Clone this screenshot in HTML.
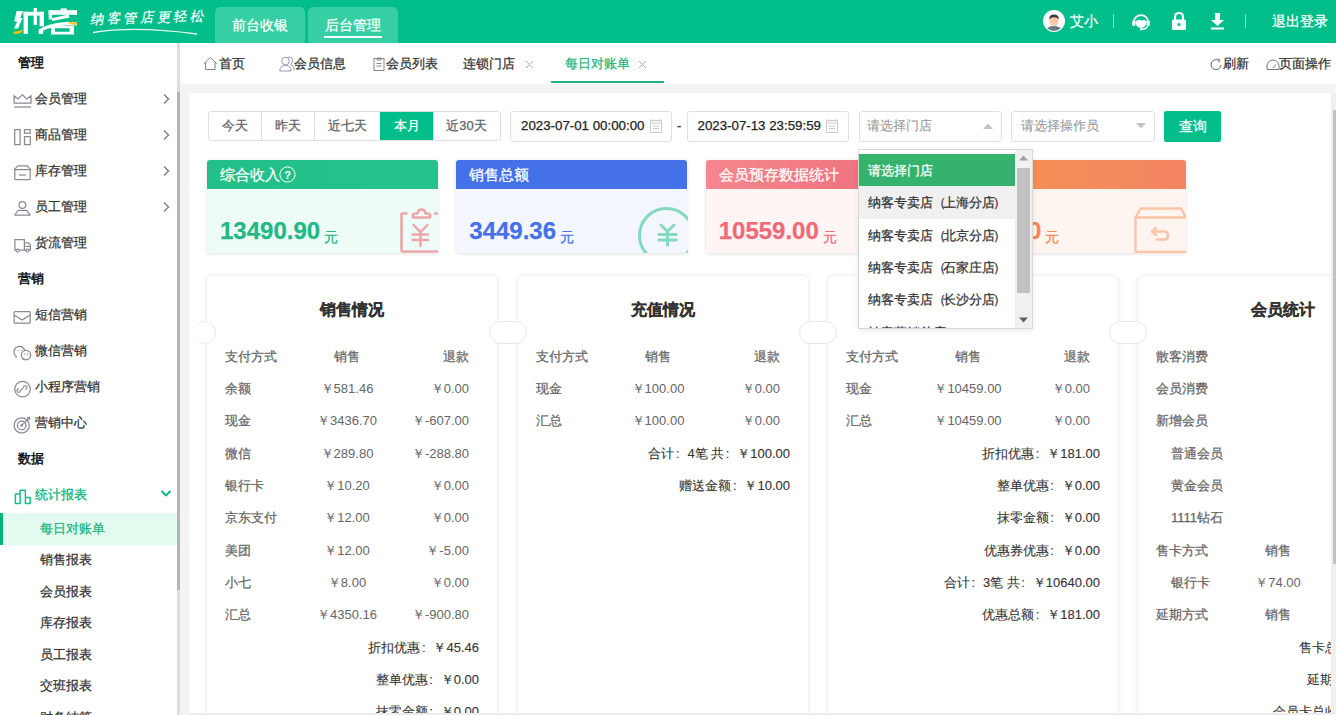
<!DOCTYPE html>
<html><head><meta charset="utf-8">
<style>
*{box-sizing:border-box;margin:0;padding:0}
body{width:1336px;height:715px;overflow:hidden;position:relative;background:#f4f4f4;font-family:"Liberation Sans",sans-serif;font-size:13px;color:#333;-webkit-text-stroke:0.25px currentColor}
.a{position:absolute;white-space:nowrap}
#hdr{position:absolute;left:0;top:0;width:1336px;height:43px;background:#00be8a}
.ntab{position:absolute;top:7px;width:90px;height:36px;background:#36cfa4;border-radius:5px 5px 0 0;color:#fff;font-size:14px;text-align:center;line-height:36px}
#side{position:absolute;left:0;top:43px;width:177px;height:672px;background:#fff;overflow:hidden}
.sh{position:absolute;left:18px;font-size:13px;color:#111;line-height:20px;-webkit-text-stroke:0.5px #111}
.si{position:absolute;left:35px;font-size:13px;color:#333;line-height:20px}
.sic{position:absolute;left:12px;width:20px;height:20px}
.arr{position:absolute;left:162px;width:9px;height:12px}
.ss{position:absolute;left:40px;font-size:13px;color:#333;line-height:20px}
#tabs{position:absolute;left:180px;top:43px;width:1156px;height:41px;background:#fff}
#main{position:absolute;left:189px;top:93px;width:1142px;height:620px;background:#fff;overflow:hidden}

.btng{position:absolute;left:207.5px;top:111px;height:30px;border:1px solid #dcdfe6;border-radius:3px;display:flex;overflow:hidden;background:#fff}
.btng div{height:28px;line-height:28px;text-align:center;color:#606266;font-size:13px;border-left:1px solid #dcdfe6}
.btng div:first-child{border-left:none}
.inp{position:absolute;top:111px;height:31px;border:1px solid #dcdfe6;border-radius:3px;background:#fff}
.stc{position:absolute;top:160px;width:231px;height:93px;border-radius:3px;box-shadow:0 1px 4px rgba(0,0,0,.12);overflow:hidden}
.stc .hd{height:29px;line-height:29px;color:#fff;font-size:15px;padding-left:13px}
.stc .num{position:absolute;left:13px;top:56px;font-size:24px;font-weight:bold;line-height:30px;font-family:"Liberation Sans",sans-serif}
.stc .yuan{font-size:14px;font-weight:normal;margin-left:4px;position:relative;top:3px}
.sec{position:absolute;top:275.5px;width:290px;height:460px;background:#fff;border-radius:5px;box-shadow:0 0 4px rgba(0,0,0,.13)}
.sec .tt{position:absolute;left:0;top:23px;width:290px;text-align:center;font-size:16px;font-weight:bold;color:#333;line-height:22px}
.row{position:absolute;left:18px;width:244px;height:20px;line-height:20px;color:#666;font-size:13px}
.row span{position:absolute;top:0;width:81.33px;white-space:nowrap}
.row .c1{left:0}
.row .c2{left:81.33px;text-align:center;-webkit-text-stroke:0}
.row .c3{left:162.67px;text-align:right;-webkit-text-stroke:0}
.sum{position:absolute;right:18px;height:20px;line-height:20px;color:#333;font-size:13px;white-space:nowrap;text-align:right}
.sum b{font-weight:normal;margin-left:4px}
.dd{position:absolute;left:858px;top:149px;width:174.5px;height:180px;background:#fff;border:1px solid #d8d8d8;box-shadow:0 2px 6px rgba(0,0,0,.08);overflow:hidden}
.dd .op{position:absolute;left:0;width:156px;height:32.3px;line-height:34px;padding-left:8.5px;font-size:13px;color:#333;white-space:nowrap}
.cl{font-style:normal;display:inline-block;width:13px;text-align:left;padding-left:1.5px}
</style></head><body>
<div id="hdr">
  <svg class="a" style="left:0;top:0" width="90" height="43" viewBox="0 0 90 43"><g fill="#fff">
<polygon points="16.6,11 23.2,11 20.2,18 22.6,18 18,28.6 14,28.6 17.2,21.6 14.2,21.6"/>
<rect x="23.6" y="11.8" width="4.4" height="22"/>
<rect x="23.6" y="11.8" width="20.4" height="3.8"/>
<rect x="33.6" y="8" width="3.3" height="17"/>
<rect x="39.6" y="11.8" width="4.4" height="14.5"/>
<rect x="38.6" y="30.6" width="4.6" height="3.2"/>
<path d="M38.5 29.5 Q50 22.5 66 22 L77 22 L77 25.5 L66 25.5 Q52 26 40 32 Z"/>
<rect x="60.6" y="8.4" width="6.2" height="2.4"/>
<rect x="48.7" y="10.2" width="28.3" height="4.6"/>
<rect x="48.7" y="10.2" width="3.3" height="9.2"/>
<rect x="73.2" y="10.2" width="3.8" height="4.8"/>
<path d="M51.5 18.2 L68.5 14.6 L69.5 17.6 L52.5 21 Z"/>
<path d="M51 26 H74 V34.6 H51 Z M55 28.2 V31.8 H69.6 V28.2 Z" fill-rule="evenodd"/>
</g>
<path d="M13.6 31.8 Q18.5 31.5 22.8 29.6 L21.6 32.4 Q17.5 34.4 13.8 33.9 Z" fill="#f7c000"/>
<path d="M66.5 20.8 Q71.5 23.2 77 22 L76.6 24.8 Q71 25.6 66.5 20.8 Z" fill="#f7c000"/>
</svg>
  <div class="a" style="left:91px;top:8.5px;font-size:13.5px;color:#fff;letter-spacing:2.6px;line-height:18px;font-family:'Liberation Serif',serif;transform:skewX(-12deg) rotate(-2deg);-webkit-text-stroke:0.2px #fff">纳客管店更轻松</div>
  <svg class="a" style="left:90px;top:27px" width="112" height="8"><path d="M3 5.5 Q45 -1.5 107 7" stroke="#e6f8f0" stroke-width="1.3" fill="none"/></svg>
  <div class="ntab" style="left:215px">前台收银</div>
  <div class="ntab" style="left:308px">后台管理</div>
  <div class="a" style="left:324px;top:36px;width:58px;height:2px;background:#fff"></div>
  <svg class="a" style="left:1043px;top:10px" width="22" height="22" viewBox="0 0 22 22"><circle cx="11" cy="11" r="11" fill="#fff"/><clipPath id="cav"><circle cx="11" cy="11" r="10"/></clipPath><g clip-path="url(#cav)"><ellipse cx="11" cy="21" rx="8" ry="5" fill="#6d7783"/><ellipse cx="11" cy="10.5" rx="4.6" ry="5.2" fill="#f5c7a5"/><path d="M6.2 9.5 Q6 4.6 11 4.6 Q16 4.6 15.8 9.5 Q14 7 11 7.2 Q8 7 6.2 9.5Z" fill="#3a3a3a"/></g></svg>
  <div class="a" style="left:1070px;top:12px;font-size:14px;color:#fff;line-height:18px">艾小</div>
  <div class="a" style="left:1113px;top:14px;width:1px;height:14px;background:rgba(255,255,255,.55)"></div>
  <svg class="a" style="left:1131px;top:11px" width="20" height="20" viewBox="0 0 20 20"><path d="M2.6 11.5 A7.4 7.4 0 0 1 17.4 11.5" stroke="#fff" stroke-width="1.7" fill="none"/><rect x="1.2" y="9.5" width="3.2" height="5.5" rx="1.2" fill="#fff"/><rect x="15.6" y="9.5" width="3.2" height="5.5" rx="1.2" fill="#fff"/><circle cx="10" cy="11.3" r="5.6" fill="#fff"/><path d="M4.6 10.2 Q5.8 5.8 10 5.8 Q14.2 5.8 15.4 10.2 Q13 8.4 11.2 9.6 Q8.6 8.2 4.6 10.2Z" fill="#00be8a"/><path d="M16.6 14.5 Q15.8 18.3 11 18.3" stroke="#fff" stroke-width="1.3" fill="none"/><circle cx="10.3" cy="18.3" r="1.3" fill="#fff"/></svg>
  <svg class="a" style="left:1171px;top:11px" width="16" height="20" viewBox="0 0 16 20"><path d="M4 9 V6 Q4 2 8 2 Q12 2 12 6 V9" stroke="#fff" stroke-width="2.2" fill="none"/><rect x="1" y="8.5" width="14" height="10.5" rx="1.5" fill="#fff"/><circle cx="8" cy="13.5" r="1.6" fill="#00be8a"/></svg>
  <svg class="a" style="left:1210px;top:12px" width="15" height="18" viewBox="0 0 15 18"><path d="M5 1 H10 V8 H14 L7.5 14 L1 8 H5Z" fill="#fff"/><rect x="1" y="15.5" width="13" height="2" fill="#fff"/></svg>
  <div class="a" style="left:1245px;top:14px;width:1px;height:14px;background:rgba(255,255,255,.55)"></div>
  <div class="a" style="left:1272px;top:12px;font-size:14px;color:#fff;line-height:18px">退出登录</div>
</div>
<div id="side">
<div class="sh" style="top:10px">管理</div>
<svg class="sic" style="top:47px" viewBox="0 0 20 20"><path d="M2.1 5.8 L6 9 L10.4 4.8 L14.8 9 L19 5.8 V13.2 H2.1 Z" stroke="#8a8a94" stroke-width="1.25" fill="none" stroke-linejoin="miter"/><path d="M2.1 17 H19" stroke="#8a8a94" stroke-width="1.25" fill="none" stroke-width="1.3"/></svg>
<div class="si" style="top:46px">会员管理</div>
<svg class="arr" style="top:50px" viewBox="0 0 9 12"><path d="M2 1.5 L6.5 6 L2 10.5" stroke="#888" stroke-width="1.6" fill="none"/></svg>
<svg class="sic" style="top:83px" viewBox="0 0 20 20"><rect x="2.7" y="3.6" width="5.4" height="15" stroke="#8a8a94" stroke-width="1.25" fill="none"/><rect x="12.5" y="3.6" width="5.8" height="3.6" stroke="#8a8a94" stroke-width="1.25" fill="none"/><rect x="12.5" y="10.6" width="5.8" height="8" stroke="#8a8a94" stroke-width="1.25" fill="none"/></svg>
<div class="si" style="top:82px">商品管理</div>
<svg class="arr" style="top:86px" viewBox="0 0 9 12"><path d="M2 1.5 L6.5 6 L2 10.5" stroke="#888" stroke-width="1.6" fill="none"/></svg>
<svg class="sic" style="top:119px" viewBox="0 0 20 20"><path d="M2.8 7.6 V16.6 Q2.8 17.6 3.8 17.6 H17.2 Q18.2 17.6 18.2 16.6 V7.6" stroke="#8a8a94" stroke-width="1.25" fill="none"/><path d="M2.3 7.6 L5.8 3.8 H15.1 L18.6 7.6 Z" stroke="#8a8a94" stroke-width="1.25" fill="none" stroke-linejoin="round"/><path d="M7 13 H13.8" stroke="#8a8a94" stroke-width="1.25" fill="none"/></svg>
<div class="si" style="top:118px">库存管理</div>
<svg class="arr" style="top:122px" viewBox="0 0 9 12"><path d="M2 1.5 L6.5 6 L2 10.5" stroke="#888" stroke-width="1.6" fill="none"/></svg>
<svg class="sic" style="top:155px" viewBox="0 0 20 20"><circle cx="10.4" cy="6.9" r="3.4" stroke="#8a8a94" stroke-width="1.25" fill="none"/><path d="M2.8 17 L5.6 13 Q6.1 12.4 7 12.4 H13.8 Q14.7 12.4 15.2 13 L18.2 17 Z" stroke="#8a8a94" stroke-width="1.25" fill="none" stroke-linejoin="round"/></svg>
<div class="si" style="top:154px">员工管理</div>
<svg class="arr" style="top:158px" viewBox="0 0 9 12"><path d="M2 1.5 L6.5 6 L2 10.5" stroke="#888" stroke-width="1.6" fill="none"/></svg>
<svg class="sic" style="top:191px" viewBox="0 0 20 20"><path d="M2.9 16 V5.5 H12.4 V16 Z" stroke="#8a8a94" stroke-width="1.25" fill="none"/><path d="M12.4 8.9 H16.5 L18.3 10.8 V16 H12.4" stroke="#8a8a94" stroke-width="1.25" fill="none"/><path d="M13.4 12.4 H18.3" stroke="#8a8a94" stroke-width="1.25" fill="none"/><circle cx="5.6" cy="16.5" r="1.5" fill="#fff" stroke="#8a8a94" stroke-width="1.25" fill="none"/><circle cx="15.5" cy="16.5" r="1.5" fill="#fff" stroke="#8a8a94" stroke-width="1.25" fill="none"/></svg>
<div class="si" style="top:190px">货流管理</div>
<div class="sh" style="top:226px">营销</div>
<svg class="sic" style="top:263px" viewBox="0 0 20 20"><rect x="2.1" y="5.6" width="16.1" height="11.6" rx="1" stroke="#8a8a94" stroke-width="1.25" fill="none"/><path d="M2.1 9 L10.2 14 L18.2 9" stroke="#8a8a94" stroke-width="1.25" fill="none"/></svg>
<div class="si" style="top:262px">短信营销</div>
<svg class="sic" style="top:299px" viewBox="0 0 20 20"><path d="M4.5 14.5 A5.5 5.5 0 1 1 9.5 15" stroke="#8a8a94" stroke-width="1.25" fill="none"/><path d="M3.6 15.6 L4.5 14.2" stroke="#8a8a94" stroke-width="1.25" fill="none"/><circle cx="14" cy="13.1" r="4.7" fill="#fff" stroke="#8a8a94" stroke-width="1.25" fill="none"/><path d="M10.8 17.6 L11.6 16.4" stroke="#8a8a94" stroke-width="1.25" fill="none"/><circle cx="6.3" cy="8.4" r=".6" fill="#8a8a94"/><circle cx="9.5" cy="8.4" r=".6" fill="#8a8a94"/><path d="M12.4 11.4 V12.8 M15.5 11.4 V12.8" stroke="#8a8a94" stroke-width="1.25" fill="none" stroke-width="1"/></svg>
<div class="si" style="top:298px">微信营销</div>
<svg class="sic" style="top:335px" viewBox="0 0 20 20"><circle cx="10.5" cy="11.1" r="7.8" stroke="#8a8a94" stroke-width="1.25" fill="none"/><path d="M8.6 12.6 A1.8 1.8 0 1 1 6.8 10.8 M8.6 12.6 L11.4 9.6 M11.4 9.6 A1.8 1.8 0 1 1 13.2 11.4" stroke="#8a8a94" stroke-width="1.25" fill="none"/></svg>
<div class="si" style="top:334px">小程序营销</div>
<svg class="sic" style="top:371px" viewBox="0 0 20 20"><circle cx="9.7" cy="11.4" r="7.6" stroke="#8a8a94" stroke-width="1.25" fill="none"/><circle cx="9.7" cy="11.4" r="4.3" stroke="#8a8a94" stroke-width="1.25" fill="none"/><circle cx="9.7" cy="11.4" r="1.3" fill="#8a8a94"/><path d="M9.7 11.4 L17.3 3.8" stroke="#8a8a94" stroke-width="1.25" fill="none"/><path d="M15 3.6 L17.6 3.5 L17.5 6" stroke="#8a8a94" stroke-width="1.25" fill="none"/></svg>
<div class="si" style="top:370px">营销中心</div>
<div class="sh" style="top:406px">数据</div>
<svg class="sic" style="top:443px" viewBox="0 0 20 20"><path d="M3.4 17.6 V8 H8.1 V17.6 Z M8.1 17.6 V4.2 H13.4 V17.6 M13.4 17.6 V11.6 H18.2 V17.6 Z" stroke="#17bf88" stroke-width="1.5" fill="none" stroke-linejoin="round"/></svg>
<div class="si" style="top:442px;color:#00b37a">统计报表</div>
<svg class="arr" style="top:446px;left:160px;width:12px;height:9px" viewBox="0 0 12 9"><path d="M1.5 2 L6 6.5 L10.5 2" stroke="#00b37a" stroke-width="1.8" fill="none"/></svg>
<div class="a" style="left:0;top:470px;width:177px;height:32px;background:#e3fbef"></div><div class="a" style="left:0;top:470px;width:3px;height:32px;background:#00b37a"></div>
<div class="ss" style="top:475.5px;color:#1fb37f">每日对账单</div>
<div class="ss" style="top:507.0px">销售报表</div>
<div class="ss" style="top:538.5px">会员报表</div>
<div class="ss" style="top:570.0px">库存报表</div>
<div class="ss" style="top:601.5px">员工报表</div>
<div class="ss" style="top:633.0px">交班报表</div>
<div class="ss" style="top:664.5px">财务结算</div>
</div>
<div class="a" style="left:177px;top:43px;width:3px;height:672px;background:#dedede"></div>
<div class="a" style="left:177px;top:92px;width:3px;height:498px;background:#b5b5b5"></div>
<div id="tabs">
  <svg class="a" style="left:23px;top:13px" width="15" height="16" viewBox="0 0 15 16"><path d="M0.8 7.8 L7.3 1.5 L13.8 7.8" stroke="#777" stroke-width="0.9" fill="none"/><path d="M2.6 6 V13.5 H12 V6" stroke="#777" stroke-width="0.9" fill="none"/></svg>
  <div class="a" style="left:39px;top:11px;line-height:20px">首页</div>
  <svg class="a" style="left:99px;top:13px" width="16" height="16" viewBox="0 0 16 16"><path d="M8.6 1.8 Q9.5 1 10.8 1 Q13.6 1 13.6 4.4 Q13.6 7 11.5 8.2 Q15 9.2 15 14.5" stroke="#8a8aa0" stroke-width="0.9" fill="none"/><circle cx="6.5" cy="5" r="3.8" stroke="#8a8aa0" stroke-width="0.9" fill="#fff"/><path d="M0.8 15 Q0.8 9.5 6.5 9.5 Q12.2 9.5 12.2 15 Z" stroke="#8a8aa0" stroke-width="0.9" fill="#fff"/></svg>
  <div class="a" style="left:114px;top:11px;line-height:20px">会员信息</div>
  <svg class="a" style="left:193px;top:14px" width="12" height="14" viewBox="0 0 12 14"><rect x="1" y="1.5" width="10" height="12" stroke="#888" stroke-width="1" fill="none"/><path d="M4 1 H8 V3 H4Z" stroke="#888" stroke-width="1" fill="none"/><path d="M3.5 6.5 H8.5 M3.5 9 H8.5" stroke="#888" stroke-width="1"/></svg>
  <div class="a" style="left:206px;top:11px;line-height:20px">会员列表</div>
  <div class="a" style="left:283px;top:11px;line-height:20px">连锁门店</div>
  <svg class="a" style="left:345px;top:17px" width="9" height="9" viewBox="0 0 9 9"><path d="M1 1 L8 8 M8 1 L1 8" stroke="#aaa" stroke-width="1"/></svg>
  <div class="a" style="left:385px;top:11px;line-height:20px;color:#1fb37f">每日对账单</div>
  <svg class="a" style="left:458px;top:17px" width="9" height="9" viewBox="0 0 9 9"><path d="M1 1 L8 8 M8 1 L1 8" stroke="#aaa" stroke-width="1"/></svg>
  <div class="a" style="left:371px;top:38px;width:113px;height:2px;background:#1fb37f"></div>
  <svg class="a" style="left:1030px;top:15px" width="13" height="13" viewBox="0 0 13 13"><path d="M11 7 A5 5 0 1 1 8.5 2.3" stroke="#666" stroke-width="1" fill="none"/><path d="M7.5 0.8 L10 2.2 L8.5 4.6" stroke="#666" stroke-width="1" fill="none"/></svg>
  <div class="a" style="left:1043px;top:11px;line-height:20px">刷新</div>
  <svg class="a" style="left:1086px;top:15px" width="14" height="13" viewBox="0 0 14 13"><path d="M1 11.5 V8 A6 6 0 0 1 13 8 V11.5 Z" stroke="#777" stroke-width="1" fill="none"/><path d="M7 10 L10 6.5" stroke="#777" stroke-width="1"/></svg>
  <div class="a" style="left:1099px;top:11px;line-height:20px">页面操作</div>
</div>
<div id="main">
<div class="a" style="left:-189px;top:-93px;width:1336px;height:715px">
<div class="btng"><div style="width:52px">今天</div><div style="width:53px">昨天</div><div style="width:66.5px">近七天</div><div style="width:52.5px;background:#00be8a;color:#fff;border-left-color:#00be8a">本月</div><div style="width:67px">近30天</div></div>
<div class="inp" style="left:510px;width:162px"></div>
<div class="a" style="left:521px;top:116px;line-height:20px;font-size:13.3px;color:#222">2023-07-01 00:00:00</div>
<svg class="a" style="left:650px;top:119px" width="12" height="14" viewBox="0 0 12 14"><rect x="0.5" y="1.5" width="11" height="12" stroke="#ccc" stroke-width="1" fill="none"/><path d="M0.5 4 H11.5 M3 7 H9 M3 9.5 H9" stroke="#ccc" stroke-width="1"/><path d="M3 0 V2 M9 0 V2" stroke="#ccc" stroke-width="1"/></svg>
<div class="a" style="left:677px;top:116px;line-height:20px;font-size:13px;color:#333">-</div>
<div class="inp" style="left:687px;width:162px"></div>
<div class="a" style="left:697.5px;top:116px;line-height:20px;font-size:13.3px;color:#222">2023-07-13 23:59:59</div>
<svg class="a" style="left:826px;top:119px" width="12" height="14" viewBox="0 0 12 14"><rect x="0.5" y="1.5" width="11" height="12" stroke="#ccc" stroke-width="1" fill="none"/><path d="M0.5 4 H11.5 M3 7 H9 M3 9.5 H9" stroke="#ccc" stroke-width="1"/><path d="M3 0 V2 M9 0 V2" stroke="#ccc" stroke-width="1"/></svg>
<div class="inp" style="left:858.5px;width:143px"></div>
<div class="a" style="left:867px;top:116px;line-height:20px;font-size:13px;color:#999;-webkit-text-stroke:0.1px #999">请选择门店</div>
<svg class="a" style="left:983px;top:123px" width="10" height="6" viewBox="0 0 10 6"><path d="M0 6 L5 0.5 L10 6Z" fill="#c0c4cc"/></svg>
<div class="inp" style="left:1011px;width:144px"></div>
<div class="a" style="left:1021px;top:116px;line-height:20px;font-size:13px;color:#999;-webkit-text-stroke:0.1px #999">请选择操作员</div>
<svg class="a" style="left:1136px;top:123px" width="10" height="6" viewBox="0 0 10 6"><path d="M0 0 L5 5.5 L10 0Z" fill="#c0c4cc"/></svg>
<div class="a" style="left:1164px;top:111px;width:57px;height:31px;background:#00be8a;border-radius:2px;color:#fff;font-size:14px;text-align:center;line-height:31px">查询</div>
<div class="stc" style="left:207px;background:#edfcf7"><div class="hd" style="background:linear-gradient(90deg,#22bf88,#26c28c)">综合收入</div><div class="num" style="color:#22b884">13490.90<span class="yuan">元</span></div></div>
<div class="stc" style="left:456.3px;background:#f3f7fd"><div class="hd" style="background:#4470e8">销售总额</div><div class="num" style="color:#4470e8">3449.36<span class="yuan">元</span></div></div>
<div class="stc" style="left:705.7px;background:#fff5f5"><div class="hd" style="background:linear-gradient(100deg,#f5878e,#ec6b78)">会员预存数据统计</div><div class="num" style="color:#ef6a76">10559.00<span class="yuan">元</span></div></div>
<div class="stc" style="left:955px;background:#fff5f0"><div class="hd" style="background:linear-gradient(100deg,#f6934f,#f38563)"></div><div class="num" style="color:#f5874e">640.00<span class="yuan">元</span></div></div>
<svg class="a" style="left:279px;top:166px" width="17" height="17" viewBox="0 0 17 17"><circle cx="8.5" cy="8.5" r="7.6" stroke="#fff" stroke-width="1" fill="none"/><text x="8.5" y="12.6" text-anchor="middle" font-size="11" fill="#fff" font-family="Liberation Sans" font-weight="bold">?</text></svg>
<svg class="a" style="left:400px;top:208px" width="38" height="45" viewBox="0 0 38 45"><path d="M7.5 5.5 H2.5 Q1.5 5.5 1.5 6.5 V42 Q1.5 43.5 3 43.5 H40 M34 5.5 H40" stroke="#eaa6a8" stroke-width="2.6" fill="none"/><path d="M13 9.5 Q12 5.5 15.5 5.5 H17.5 Q18 1.5 21.5 1.5 Q25 1.5 25.5 5.5 H27.5 Q31 5.5 30 9.5 Z" stroke="#eaa6a8" stroke-width="2.6" fill="none" stroke-linejoin="round"/><path d="M13.5 17 L20.5 24 L27.5 17 M12.5 26.5 H28 M12.5 32 H28 M20.5 24 V38" stroke="#eaa6a8" stroke-width="2.4" fill="none" stroke-linecap="round"/></svg>
<svg class="a" style="left:636px;top:205px" width="52" height="48" viewBox="0 0 52 48"><circle cx="30.5" cy="30.5" r="27" stroke="#86d9bf" stroke-width="3" fill="none"/><path d="M25 20 L31.5 26.5 L38 20 M22.8 29.5 H40.2 M22.8 35 H40.2 M31.5 26.5 V40" stroke="#86d9bf" stroke-width="3" fill="none" stroke-linecap="round"/></svg>
<svg class="a" style="left:1134px;top:207px" width="52" height="46" viewBox="0 0 52 46"><path d="M1.5 44 V10.5 L6.5 1.5 H47 L52 10.5 M1.5 10.5 H52 M1.5 44 Q1.5 45 3 45 H52" stroke="#fcc4a6" stroke-width="2.4" fill="none" stroke-linejoin="round"/><path d="M22 21 L18 24.5 L22 28 M18.5 24.5 H30 Q34 24.5 34 28.5 Q34 32.5 30 32.5 H23" stroke="#fcc4a6" stroke-width="2.6" fill="none" stroke-linecap="round" stroke-linejoin="round"/></svg>
<div class="sec" style="left:207px"></div>
<div class="sec" style="left:518px"></div>
<div class="sec" style="left:828px"></div>
<div class="sec" style="left:1138px"></div>
<div class="a" style="left:194px;top:320.5px;width:22px;height:23px;border-radius:50%;border:1px solid #e8e8e8;border-left-color:#fbfbfb;border-top-color:#f0f0f0;border-bottom-color:#f0f0f0;background:#fff"></div>
<div class="a" style="left:488.5px;top:320.5px;width:38px;height:23px;border-radius:11.5px;border:1px solid #e6e6e6;background:#fff"></div>
<div class="a" style="left:799px;top:320.5px;width:38px;height:23px;border-radius:11.5px;border:1px solid #e6e6e6;background:#fff"></div>
<div class="a" style="left:1109px;top:320.5px;width:38px;height:23px;border-radius:11.5px;border:1px solid #e6e6e6;background:#fff"></div>
<div class="a" style="left:207px;top:299px;width:290px;text-align:center;font-size:16px;font-weight:bold;color:#333;line-height:22px">销售情况</div>
<div class="row" style="left:225px;top:346.60px"><span class="c1">支付方式</span><span class="c2" style="-webkit-text-stroke:0.25px #666">销售</span><span class="c3" style="-webkit-text-stroke:0.25px #666">退款</span></div>
<div class="row" style="left:225px;top:378.95px"><span class="c1">余额</span><span class="c2">￥581.46</span><span class="c3">￥0.00</span></div>
<div class="row" style="left:225px;top:411.30px"><span class="c1">现金</span><span class="c2">￥3436.70</span><span class="c3">￥-607.00</span></div>
<div class="row" style="left:225px;top:443.65px"><span class="c1">微信</span><span class="c2">￥289.80</span><span class="c3">￥-288.80</span></div>
<div class="row" style="left:225px;top:476.00px"><span class="c1">银行卡</span><span class="c2">￥10.20</span><span class="c3">￥0.00</span></div>
<div class="row" style="left:225px;top:508.35px"><span class="c1">京东支付</span><span class="c2">￥12.00</span><span class="c3">￥0.00</span></div>
<div class="row" style="left:225px;top:540.70px"><span class="c1">美团</span><span class="c2">￥12.00</span><span class="c3">￥-5.00</span></div>
<div class="row" style="left:225px;top:573.05px"><span class="c1">小七</span><span class="c2">￥8.00</span><span class="c3">￥0.00</span></div>
<div class="row" style="left:225px;top:605.40px"><span class="c1">汇总</span><span class="c2">￥4350.16</span><span class="c3">￥-900.80</span></div>
<div class="a" style="left:207px;width:272px;-webkit-text-stroke:0.1px #333;top:637.75px;text-align:right;color:#333;line-height:20px">折扣优惠<i class="cl">:</i>￥45.46</div>
<div class="a" style="left:207px;width:272px;-webkit-text-stroke:0.1px #333;top:670.10px;text-align:right;color:#333;line-height:20px">整单优惠<i class="cl">:</i>￥0.00</div>
<div class="a" style="left:207px;width:272px;-webkit-text-stroke:0.1px #333;top:702.45px;text-align:right;color:#333;line-height:20px">抹零金额<i class="cl">:</i>￥0.00</div>
<div class="a" style="left:518px;top:299px;width:290px;text-align:center;font-size:16px;font-weight:bold;color:#333;line-height:22px">充值情况</div>
<div class="row" style="left:536px;top:346.60px"><span class="c1">支付方式</span><span class="c2" style="-webkit-text-stroke:0.25px #666">销售</span><span class="c3" style="-webkit-text-stroke:0.25px #666">退款</span></div>
<div class="row" style="left:536px;top:378.95px"><span class="c1">现金</span><span class="c2">￥100.00</span><span class="c3">￥0.00</span></div>
<div class="row" style="left:536px;top:411.30px"><span class="c1">汇总</span><span class="c2">￥100.00</span><span class="c3">￥0.00</span></div>
<div class="a" style="left:518px;width:272px;-webkit-text-stroke:0.1px #333;top:443.65px;text-align:right;color:#333;line-height:20px">合计<i class="cl">:</i>4笔 共<i class="cl">:</i>￥100.00</div>
<div class="a" style="left:518px;width:272px;-webkit-text-stroke:0.1px #333;top:476.00px;text-align:right;color:#333;line-height:20px">赠送金额<i class="cl">:</i>￥10.00</div>
<div class="a" style="left:828px;top:299px;width:290px;text-align:center;font-size:16px;font-weight:bold;color:#333;line-height:22px"></div>
<div class="row" style="left:846px;top:346.60px"><span class="c1">支付方式</span><span class="c2" style="-webkit-text-stroke:0.25px #666">销售</span><span class="c3" style="-webkit-text-stroke:0.25px #666">退款</span></div>
<div class="row" style="left:846px;top:378.95px"><span class="c1">现金</span><span class="c2">￥10459.00</span><span class="c3">￥0.00</span></div>
<div class="row" style="left:846px;top:411.30px"><span class="c1">汇总</span><span class="c2">￥10459.00</span><span class="c3">￥0.00</span></div>
<div class="a" style="left:828px;width:272px;-webkit-text-stroke:0.1px #333;top:443.65px;text-align:right;color:#333;line-height:20px">折扣优惠<i class="cl">:</i>￥181.00</div>
<div class="a" style="left:828px;width:272px;-webkit-text-stroke:0.1px #333;top:476.00px;text-align:right;color:#333;line-height:20px">整单优惠<i class="cl">:</i>￥0.00</div>
<div class="a" style="left:828px;width:272px;-webkit-text-stroke:0.1px #333;top:508.35px;text-align:right;color:#333;line-height:20px">抹零金额<i class="cl">:</i>￥0.00</div>
<div class="a" style="left:828px;width:272px;-webkit-text-stroke:0.1px #333;top:540.70px;text-align:right;color:#333;line-height:20px">优惠券优惠<i class="cl">:</i>￥0.00</div>
<div class="a" style="left:828px;width:272px;-webkit-text-stroke:0.1px #333;top:573.05px;text-align:right;color:#333;line-height:20px">合计<i class="cl">:</i>3笔 共<i class="cl">:</i>￥10640.00</div>
<div class="a" style="left:828px;width:272px;-webkit-text-stroke:0.1px #333;top:605.40px;text-align:right;color:#333;line-height:20px">优惠总额<i class="cl">:</i>￥181.00</div>
<div class="a" style="left:1138px;top:299px;width:290px;text-align:center;font-size:16px;font-weight:bold;color:#333;line-height:22px">会员统计</div>
<div class="row" style="left:1156px;top:346.60px"><span class="c1">散客消费</span></div>
<div class="row" style="left:1156px;top:378.95px"><span class="c1">会员消费</span></div>
<div class="row" style="left:1156px;top:411.30px"><span class="c1">新增会员</span></div>
<div class="row" style="left:1156px;top:443.65px"><span class="c1" style="left:15px">普通会员</span></div>
<div class="row" style="left:1156px;top:476.00px"><span class="c1" style="left:15px">黄金会员</span></div>
<div class="row" style="left:1156px;top:508.35px"><span class="c1" style="left:15px">1111钻石</span></div>
<div class="row" style="left:1156px;top:540.70px"><span class="c1">售卡方式</span><span class="c2" style="-webkit-text-stroke:0.25px #666">销售</span></div>
<div class="row" style="left:1156px;top:573.05px"><span class="c1" style="left:15px">银行卡</span><span class="c2">￥74.00</span></div>
<div class="row" style="left:1156px;top:605.40px"><span class="c1">延期方式</span><span class="c2" style="-webkit-text-stroke:0.25px #666">销售</span></div>
<div class="a" style="left:1138px;width:272px;-webkit-text-stroke:0.1px #333;top:637.75px;text-align:right;color:#333;line-height:20px">售卡总额<i class="cl">:</i>￥74.00</div>
<div class="a" style="left:1138px;width:272px;-webkit-text-stroke:0.1px #333;top:670.10px;text-align:right;color:#333;line-height:20px">延期总额<i class="cl">:</i>￥0.00</div>
<div class="a" style="left:1138px;width:272px;-webkit-text-stroke:0.1px #333;top:702.45px;text-align:right;color:#333;line-height:20px">会员卡总收入<i class="cl">:</i>￥74.00</div>
<div class="dd">
<div class="op" style="top:4px;height:33px;background:#35b26e;color:#fff">请选择门店</div>
<div class="op" style="top:36.3px;background:#f0f0f0">纳客专卖店<i style="font-style:normal;margin-right:-3px">（</i>上海分店<i style="font-style:normal;margin-left:-2px">）</i></div>
<div class="op" style="top:68.6px">纳客专卖店<i style="font-style:normal;margin-right:-3px">（</i>北京分店<i style="font-style:normal;margin-left:-2px">）</i></div>
<div class="op" style="top:100.9px">纳客专卖店<i style="font-style:normal;margin-right:-3px">（</i>石家庄店<i style="font-style:normal;margin-left:-2px">）</i></div>
<div class="op" style="top:133.2px">纳客专卖店<i style="font-style:normal;margin-right:-3px">（</i>长沙分店<i style="font-style:normal;margin-left:-2px">）</i></div>
<div class="op" style="top:165.5px">纳客营销总店</div>
<div class="a" style="left:156px;top:0;width:17px;height:178px;background:#f0f0f0"></div>
<div class="a" style="left:158px;top:17.5px;width:13px;height:125px;background:#c1c1c1"></div>
<svg class="a" style="left:160px;top:5px" width="9" height="6" viewBox="0 0 9 6"><path d="M0 5.5 L4.5 0.5 L9 5.5Z" fill="#a3a3a3"/></svg>
<svg class="a" style="left:160px;top:167px" width="9" height="6" viewBox="0 0 9 6"><path d="M0 0.5 L4.5 5.5 L9 0.5Z" fill="#606060"/></svg>
</div>
</div>
</div>
<div class="a" style="left:1331px;top:93px;width:5px;height:622px;background:#efefef"></div><div class="a" style="left:1333px;top:110px;width:3px;height:453.5px;background:#c1c1c1"></div><div class="a" style="left:189px;top:713px;width:1142px;height:2px;background:#ececec"></div>
</body></html>
